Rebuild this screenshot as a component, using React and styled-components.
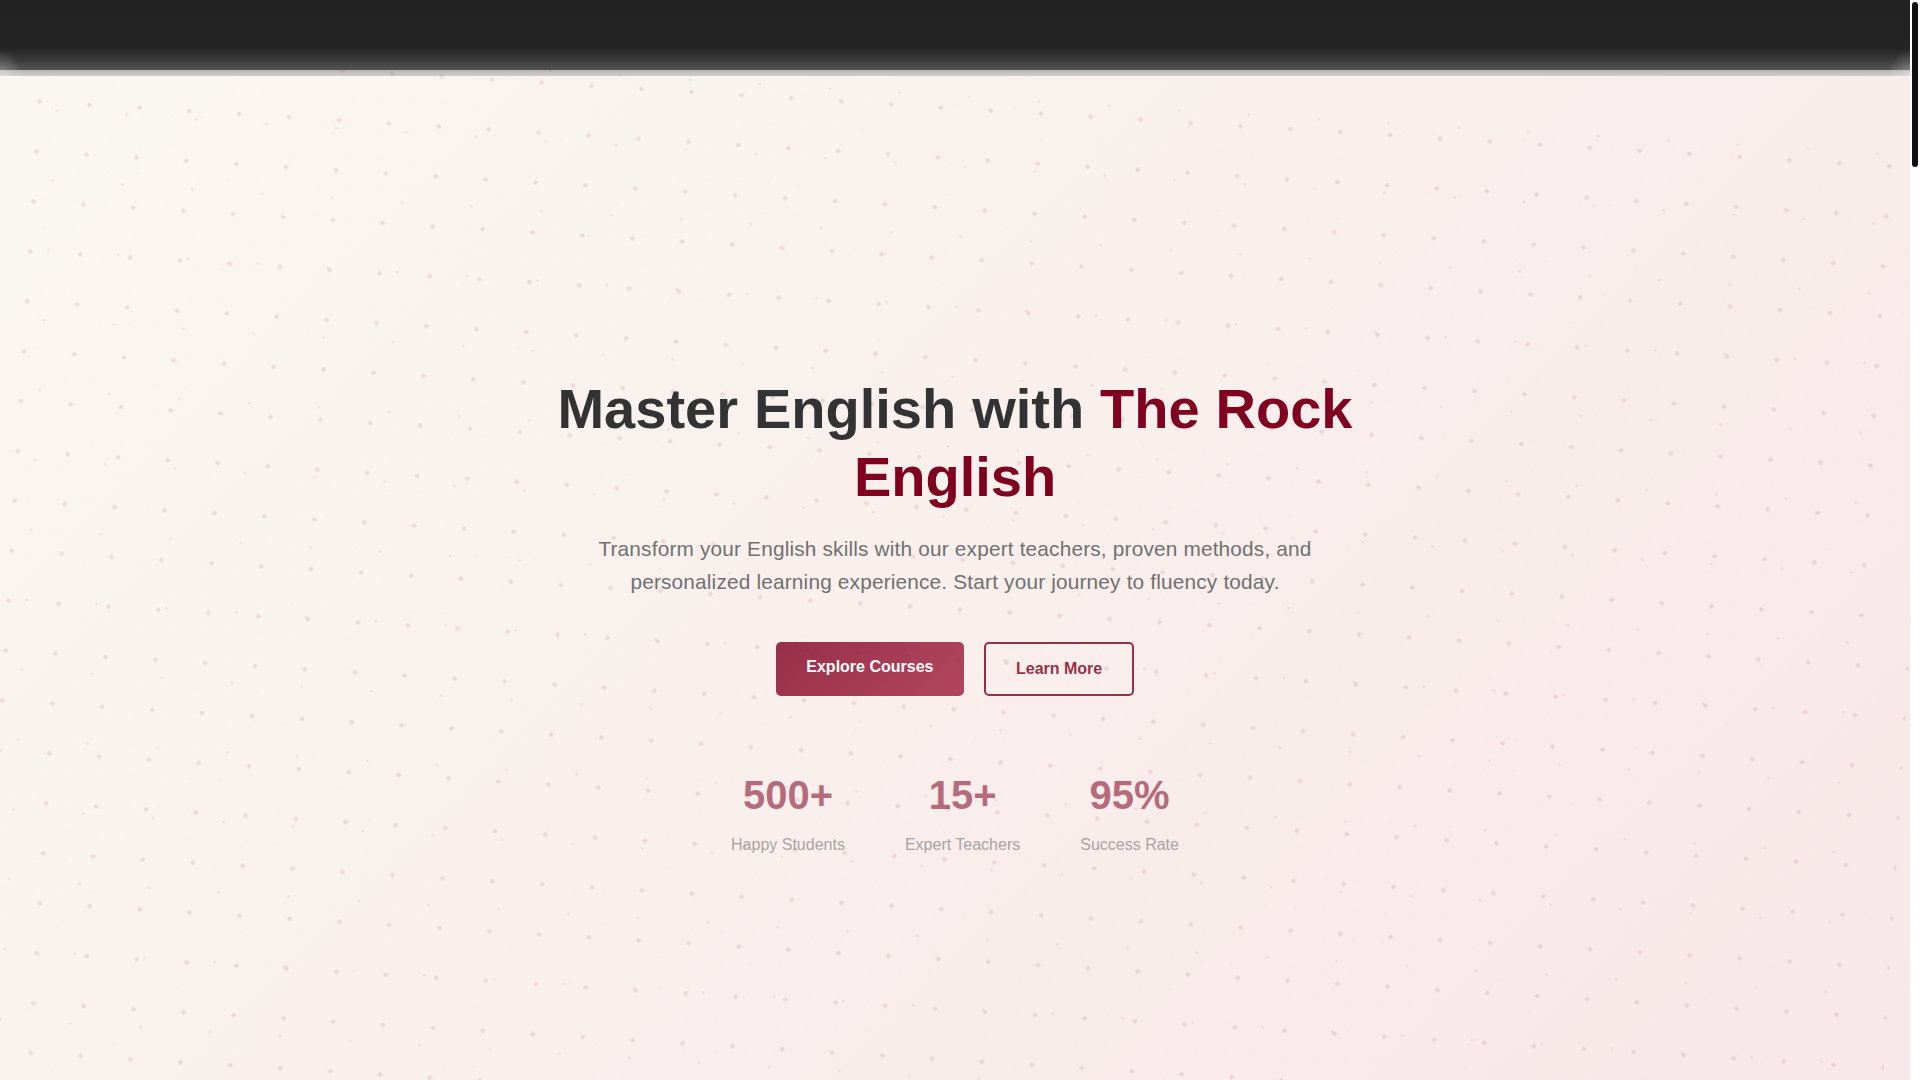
import React from 'react';
import styled, { createGlobalStyle } from 'styled-components';

const GlobalStyle = createGlobalStyle`
	html, body {
		margin: 0;
		padding: 0;
		height: 100%;
		overflow: hidden;
		background: #fff;
		font-family: 'Liberation Sans', Arial, sans-serif;
	}
`;

const Page = styled.div`
	display: flex;
	height: 1080px;
	overflow: hidden;
`;

const Main = styled.div`
	flex: 1;
	display: flex;
	flex-direction: column;
	overflow: hidden;
`;

const Rail = styled.div`
	width: 10px;
	flex-shrink: 0;
	padding: 2px 2px 0;
	box-sizing: border-box;
	background: #fff;
`;

const Thumb = styled.div`
	width: 6px;
	height: 165px;
	background: #111;
	border-radius: 3px;
`;

const Header = styled.header`
	position: relative;
	z-index: 2;
	flex-shrink: 0;
	height: 76px;
	background: linear-gradient(
		#222 0,
		#242424 48px,
		#3a3a3a 60px,
		#555 70px,
		rgba(70, 60, 55, 0.38) 70px,
		rgba(70, 60, 55, 0.26) 76px
	);
	&::after {
		content: '';
		position: absolute;
		inset: 0;
		background:
			radial-gradient(ellipse 22px 26px at 0 100%, rgba(255, 255, 255, 0.3), rgba(255, 255, 255, 0)),
			radial-gradient(ellipse 22px 26px at 100% 100%, rgba(255, 255, 255, 0.3), rgba(255, 255, 255, 0));
	}
`;

const Hero = styled.section`
	position: relative;
	flex-shrink: 0;
	height: 1080px;
	box-sizing: border-box;
	padding-top: 299px;
	display: flex;
	flex-direction: column;
	align-items: center;
	background: linear-gradient(135deg, #faf7f2 0%, #f8e7e8 100%);
`;

const Dots = styled.div`
	position: absolute;
	inset: 0;
	transform: rotate(3.55deg);
	background-image:
		radial-gradient(circle at 9.5px 33.4px, rgba(128, 0, 32, 0.1) 2px, transparent 2.4px),
		radial-gradient(circle at 27.4px 21.3px, rgba(128, 0, 32, 0.1) 1px, transparent 1.4px),
		radial-gradient(circle at 15px 15px, rgba(128, 0, 32, 0.015) 1px, transparent 1.4px);
	background-size: 50px 50px, 70px 70px, 30px 30px;
	background-position: 0 0, 0 0, 7.4px 14.5px;
`;

const Content = styled.div`
	position: relative;
	width: 800px;
	display: flex;
	flex-direction: column;
	align-items: center;
	text-align: center;
`;

const Title = styled.h1`
	margin: 0 0 21px;
	font-size: 56px;
	font-weight: 700;
	line-height: 68px;
	word-spacing: 0.4px;
	color: #333;
`;

const Brand = styled.span`
	color: #800020;
`;

const Lead = styled.p`
	margin: 0 0 43px;
	font-size: 20.8px;
	line-height: 33.3px;
	letter-spacing: 0.18px;
	color: #666;
	opacity: 0.92;
`;

const Actions = styled.div`
	display: flex;
	gap: 20px;
	height: 54px;
	margin-bottom: 75px;
`;

const Button = styled.a`
	display: block;
	padding: 12px 30px;
	font-size: 16px;
	font-weight: 700;
	line-height: 26px;
	border-radius: 5px;
	opacity: 0.8;
`;

const PrimaryButton = styled(Button)`
	padding: 12px 30.5px;
	color: #fff;
	background: linear-gradient(135deg, #800020, #a01c3c);
`;

const OutlineButton = styled(Button)`
	color: #800020;
	border: 2px solid #800020;
`;

const Stats = styled.div`
	display: flex;
	gap: 60px;
	opacity: 0.55;
`;

const Stat = styled.div`
	display: flex;
	flex-direction: column;
	align-items: center;
`;

const StatValue = styled.div`
	font-size: 40px;
	font-weight: 700;
	line-height: 48px;
	color: #800020;
	margin-bottom: 14px;
`;

const StatLabel = styled.div`
	font-size: 16px;
	line-height: 24px;
	color: #666;
`;

const stats = [
	{ value: '500+', label: 'Happy Students' },
	{ value: '15+', label: 'Expert Teachers' },
	{ value: '95%', label: 'Success Rate' },
];

const App = () => (
	<Page>
		<GlobalStyle />
		<Main>
			<Header />
			<Hero>
				<Dots />
				<Content>
					<Title>
						Master English with <Brand>The Rock English</Brand>
					</Title>
					<Lead>
						Transform your English skills with our expert teachers, proven methods, and personalized
						learning experience. Start your journey to fluency today.
					</Lead>
					<Actions>
						<PrimaryButton>Explore Courses</PrimaryButton>
						<OutlineButton>Learn More</OutlineButton>
					</Actions>
					<Stats>
						{stats.map(stat => (
							<Stat key={stat.label}>
								<StatValue>{stat.value}</StatValue>
								<StatLabel>{stat.label}</StatLabel>
							</Stat>
						))}
					</Stats>
				</Content>
			</Hero>
		</Main>
		<Rail>
			<Thumb />
		</Rail>
	</Page>
);

export default App;
